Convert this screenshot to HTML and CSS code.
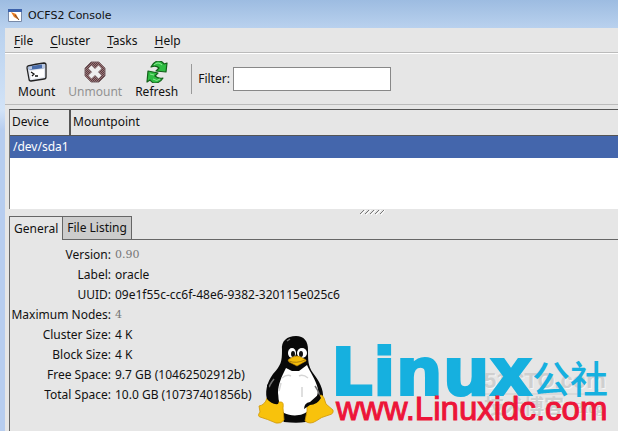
FILE: index.html
```html
<!DOCTYPE html>
<html lang="en">
<head>
<meta charset="utf-8">
<title>OCFS2 Console</title>
<link rel="stylesheet" href="styles.css">
</head>
<body>
<div class="window">
  <header class="titlebar">
    <svg class="app-icon" width="14" height="13" viewBox="0 0 14 13"><path fill="#fff" stroke="#7889a7" d="M.5.5h13v12H.5z"/><path fill="#3c62ab" d="M0 0h14v3H0z"/><path fill="#e47a22" d="M3 3l5 2 3 6-5-3z"/><path stroke="#6c4a35" d="M7 6l4 5"/></svg>
    <h1 class="title">OCFS2 Console</h1>
  </header>
  <main class="client">
    <nav class="menubar">
      <button class="menu"><u>F</u>ile</button>
      <button class="menu"><u>C</u>luster</button>
      <button class="menu"><u>T</u>asks</button>
      <button class="menu"><u>H</u>elp</button>
    </nav>
    <div class="toolbar">
      <button class="tool">
        <svg width="22" height="22" viewBox="0 0 22 22"><path fill="#e3e7ef" stroke="#222" stroke-width="1.3" d="M2 5Q10 3 18 2q2 0 2 2v12q0 2-2 2l-13 2q-2 0-2-2L1 7q0-2 1-2z"/><path fill="#476ba9" d="M2 6q8-2 17-3v4L3 9z"/><path fill="#b9c8e3" d="M2 6l4-1v3L3 9zM16 3h3v4h-3z"/><path fill="#fff" d="M4 10l14-2v8L5 18z"/><path fill="none" stroke="#111" stroke-width="1.3" d="M5 11l3 2-2 2m3 0h3"/></svg>
        <span>Mount</span>
      </button>
      <button class="tool" disabled>
        <svg width="22" height="22" viewBox="0 0 22 22"><defs><pattern id="dither" width="2" height="2" patternUnits="userSpaceOnUse"><path fill="#9c7577" d="M0 0h2v2H0z"/><path fill="#593e42" d="M0 0h1v1H0zM1 1h1v1H1z"/></pattern></defs><path fill="url(#dither)" stroke="#796366" d="M7 1h8l6 6v8l-6 6H7l-6-6V7z"/><path stroke="#8b7779" stroke-width="5.500" d="M6 6l10 10M16 6L6 16"/><path stroke="#eee" stroke-width="4" d="M6 6l10 10M16 6L6 16"/></svg>
        <span>Unmount</span>
      </button>
      <button class="tool">
        <svg width="22" height="22" viewBox="0 0 22 22"><g fill="#2fbd43" stroke="#126019" stroke-width="1.200" stroke-linejoin="round"><path d="M5 6Q8 0 13 0q3 0 5 3l3-1-1 9-10-1 3-3q-3-3-8-1z"/><path d="M17 17q-3 5-8 5-3 0-5-3l-3 2 1-11 10 2-3 3q3 3 8 2z"/></g><path fill="none" stroke="#8ee794" d="M8 4q4-4 8 0M4 13l4 1m-1 4q4 3 7 0"/></svg>
        <span>Refresh</span>
      </button>
      <div class="filter">
        <label for="filter">Filter:</label>
        <input id="filter" type="text">
      </div>
    </div>
    <div class="devices">
      <table class="device-table">
        <thead><tr><th class="device-col">Device</th><th>Mountpoint</th></tr></thead>
        <tbody><tr><td>/dev/sda1</td><td></td></tr></tbody>
      </table>
    </div>
    <div class="splitter"><svg width="26" height="6" viewBox="0 0 26 6"><path stroke="#fff" d="M2 6l5-5m0 5l5-5m0 5l5-5m0 5l5-5m0 5l4-5"/><path stroke="#777" d="M1 5l4-4m1 4l4-4m1 4l4-4m1 4l4-4m1 4l4-4"/></svg></div>
    <section class="notebook">
      <div class="tabs" role="tablist">
        <button class="tab active" role="tab" aria-selected="true">General</button>
        <button class="tab" role="tab" aria-selected="false">File Listing</button>
      </div>
      <dl class="details">
        <dt>Version:</dt><dd class="muted">0.90</dd>
        <dt>Label:</dt><dd>oracle</dd>
        <dt>UUID:</dt><dd>09e1f55c-cc6f-48e6-9382-320115e025c6</dd>
        <dt>Maximum Nodes:</dt><dd class="muted">4</dd>
        <dt>Cluster Size:</dt><dd>4 K</dd>
        <dt>Block Size:</dt><dd>4 K</dd>
        <dt>Free Space:</dt><dd>9.7 GB (10462502912b)</dd>
        <dt>Total Space:</dt><dd>10.0 GB (10737401856b)</dd>
      </dl>
    </section>
  </main>
  <svg class="watermark" width="368" height="101" viewBox="0 0 368 101">
    <g class="stamp-light"><text class="stamp" x="235" y="59">51CTO.com</text><text class="stamp-small" x="235" y="85">技术博客</text><text class="stamp-blog" x="325" y="84">Blog</text></g>
    <g class="stamp-dark"><text class="stamp" x="234" y="58">51CTO.com</text><text class="stamp-small" x="234" y="84">技术博客</text><text class="stamp-blog" x="324" y="83">Blog</text></g>
    <path stroke="#ccc" d="M233 64h123"/>
    <path fill="#080808" d="M32 20C31 11 37 6 46 6c8 0 12 5 12 14 0 10 0 16 5 23 6 8 11 16 10 26L62 90q-8 4-28 2L18 72c-4-9-1-20 5-28 8-9 9-12 9-24z"/>
    <path fill="#fff" d="M36 38l6 3 7 0 8-6c3 7 9 15 11 24 0 8-4 16-9 21-5 6-17 7-25 3-6-6-5-13-6-20 0-9 4-17 8-25z"/>
    <path fill="none" stroke="#d5d5d5" stroke-width="1.500" d="M32 48q5-4 9-2m8 0q4-2 9 2M52 57v10M31 53l-2 8"/>
    <path fill="none" stroke="#727272" stroke-width="1.500" d="M37 11l3-2M24 49q-5 6-6 12M65 56q5 7 5 13"/>
    <ellipse cx="42" cy="23" rx="4" ry="5" fill="#fff"/><ellipse cx="52" cy="23" rx="5" ry="5" fill="#fff"/><ellipse cx="43" cy="24" rx="2" ry="3" fill="#111"/><ellipse cx="51" cy="24" rx="2" ry="3" fill="#111"/>
    <path fill="#f5bd0b" stroke="#b17e06" stroke-width=".6" d="M38 30q5-4 9-4 3 0 9 4v1L47 36l-8-4z"/><path fill="none" stroke="#8c6409" stroke-width=".7" d="M39 31q7 3 16-1"/>
    <path fill="#f8c20c" stroke="#cf9705" stroke-width=".8" d="M17 68q3 0 8 4h6q3 0 2 6l1 12q-3 4-8 3-9-4-16-6-3-1 0-5l-1-6q6-1 8-8z"/>
    <path fill="#f8c20c" stroke="#cf9705" stroke-width=".8" d="M57 74q6 0 11-6 3-6 6 0l2 6 7 6q1 4-4 5-8 2-13 6-6 4-11 0l2-10z"/>
    <path fill="#080808" d="M17 54l9 12q4 5 2 8-6 1-11-5zM54 79q0-6 6-7l9-8 2 4q-4 7-11 7z"/>
    <text class="brand" x="81" y="65">Linux</text>
    <text class="brand-cjk" x="282" y="63">公社</text>
    <text class="site" x="86" y="90">www.Linuxidc.com</text>
  </svg>
</div>
</body>
</html>
```
FILE: styles.css
```css
* { box-sizing: border-box; }
body { margin: 0; font: 12px/20px "Noto Sans", sans-serif; color: #111; }
button, input { font: inherit; color: inherit; }
button { background: none; border: 0; padding: 0; }
.window {
  position: relative;
  display: flex;
  flex-direction: column;
  min-height: 100vh;
  padding-left: 5px;
  overflow: hidden;
  background: linear-gradient(#9dbce1, #b9d1ee 28px, #d2e3f7 110px, #b7cdef 130px);
}
.titlebar { display: flex; align-items: center; gap: 6px; height: 28px; padding: 3px 3px 0; }
.title { margin: 0; font: 11px/20px "DejaVu Sans", sans-serif; }
.client { flex: 1; display: flex; flex-direction: column; background: #e6e6e6; }
.menubar { display: flex; gap: 17px; height: 25px; padding: 3px 9px 0; border-bottom: 1px solid #bbb; }
.menu { height: 20px; line-height: 20px; }
u { text-underline-offset: 2px; }
.toolbar { display: flex; align-items: center; gap: 13px; height: 52px; padding: 0 13px; border-top: 1px solid #fff; border-bottom: 1px solid #bbb; }
.tool { display: flex; flex-direction: column; align-items: center; padding-top: 3px; line-height: 18px; }
.tool:disabled { color: #929292; }
.filter { display: flex; align-items: center; gap: 3px; height: 30px; padding-left: 6px; border-left: 1px solid #999; }
.filter input { width: 158px; height: 24px; padding: 0 4px; border: 1px solid #888; background: #fff; }
.devices { height: 100px; margin: 4px 0 0 4px; border-top: 1px solid #555; border-left: 1px solid #777; background: #fff; }
.device-table { width: 100%; border-collapse: collapse; table-layout: fixed; }
.device-table th { height: 25px; padding: 0 2px; background: #e6e6e6; border-bottom: 1px solid #555; font-weight: 400; text-align: left; }
.device-table .device-col { width: 60px; border-right: 2px solid #555; }
.device-table td { height: 23px; padding: 0 3px; background: #4466ac; color: #fff; }
.splitter { display: flex; justify-content: center; height: 7px; padding-left: 120px; }
.notebook { flex: 1; display: flex; flex-direction: column; margin-left: 4px; }
.tabs { display: flex; height: 24px; box-shadow: inset 0 -1px #666; }
.tab { height: 24px; padding: 0 4px; border: 1px solid #666; border-left-width: 0; background: #ccc; }
.active { border-left-width: 1px; border-bottom: 0; background: #e6e6e6; }
.details { flex: 1; display: grid; grid-template-columns: 101px 1fr; grid-auto-rows: 20px; column-gap: 4px; margin: 0; padding-top: 5px; border-left: 1px solid #666; }
.details dt { text-align: right; white-space: nowrap; }
.details dd { margin: 0; white-space: nowrap; }
.details .muted { font: 11px/20px "DejaVu Serif", serif; color: #777; }
.watermark { position: absolute; left: 250px; top: 330px; overflow: visible; }
.brand { font: bold 66px "DejaVu Sans", sans-serif; fill: #16b0df; stroke: #16b0df; stroke-width: 2px; }
.brand-cjk { font: 500 38px "Noto Sans CJK SC", sans-serif; fill: #16b0df; }
.site { font: 33px "Liberation Sans", sans-serif; fill: #ed1438; stroke: #ed1438; stroke-width: 1px; }
.stamp { font: bold 22px "Liberation Sans", sans-serif; }
.stamp-small { font: bold 20px "Noto Sans CJK SC", sans-serif; }
.stamp-blog { font: bold 15px "Liberation Serif", serif; }
.stamp-light { fill: #f4f4f4; }
.stamp-dark { fill: #cfcfcf; }
```
